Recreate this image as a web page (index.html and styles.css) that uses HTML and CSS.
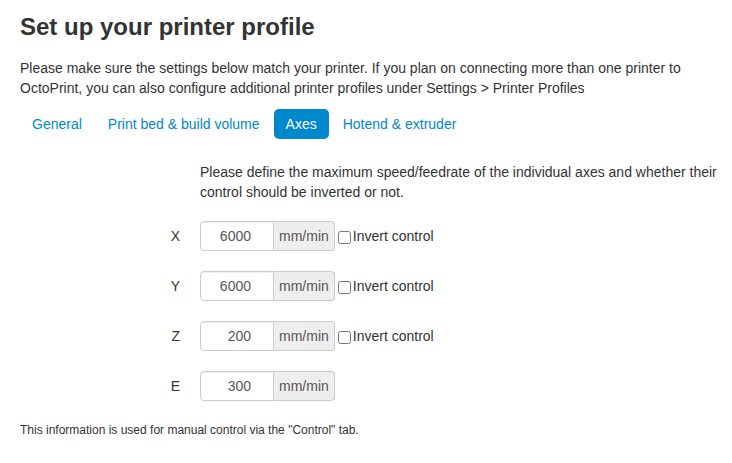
FILE: index.html
```html
<!DOCTYPE html>
<html>
<head>
<meta charset="utf-8">
<link rel="stylesheet" href="styles.css">
</head>
<body>
<div class="page">
  <h3 class="title">Set up your printer profile</h3>
  <p class="lead">Please make sure the settings below match your printer. If you plan on connecting more than one printer to OctoPrint, you can also configure additional printer profiles under Settings &gt; Printer Profiles</p>
  <ul class="pills">
    <li><a href="#">General</a></li>
    <li><a href="#">Print bed &amp; build volume</a></li>
    <li class="active"><a href="#">Axes</a></li>
    <li><a href="#">Hotend &amp; extruder</a></li>
  </ul>
  <form class="form">
    <p class="intro">Please define the maximum speed/feedrate of the individual axes and whether their control should be inverted or not.</p>
    <div class="group">
      <label class="axis">X</label>
      <div class="controls">
        <div class="append"><input class="num" type="text" value="6000"><span class="addon">mm/min</span></div>
        <label class="check"><input type="checkbox">Invert control</label>
      </div>
    </div>
    <div class="group">
      <label class="axis">Y</label>
      <div class="controls">
        <div class="append"><input class="num" type="text" value="6000"><span class="addon">mm/min</span></div>
        <label class="check"><input type="checkbox">Invert control</label>
      </div>
    </div>
    <div class="group">
      <label class="axis">Z</label>
      <div class="controls">
        <div class="append"><input class="num" type="text" value="200"><span class="addon">mm/min</span></div>
        <label class="check"><input type="checkbox">Invert control</label>
      </div>
    </div>
    <div class="group">
      <label class="axis">E</label>
      <div class="controls">
        <div class="append"><input class="num" type="text" value="300"><span class="addon">mm/min</span></div>
      </div>
    </div>
  </form>
  <p class="note">This information is used for manual control via the "Control" tab.</p>
</div>
</body>
</html>
```
FILE: styles.css
```css
html, body {
  margin: 0;
  padding: 0;
  background: #fff;
}
body {
  font-family: "Liberation Sans", Arial, sans-serif;
  font-size: 14px;
  line-height: 20px;
  color: #333;
}
.page {
  padding: 0 12px 0 20px;
}
.title {
  margin: 0;
  padding-top: 7px;
  font-size: 24px;
  line-height: 40px;
  font-weight: bold;
  color: #333;
}
.lead {
  margin: 11px 0 9px;
}
.pills {
  list-style: none;
  margin: 0 0 21px;
  padding: 0;
  display: flex;
}
.pills li {
  margin: 2px 2px 2px 0;
}
.pills a {
  display: block;
  padding: 8px 12px;
  line-height: 14px;
  color: #0088cc;
  text-decoration: none;
  border-radius: 5px;
}
.pills .active a {
  background: #0088cc;
  color: #fff;
}
.form {
  margin: 0;
}
.intro {
  margin: 0 0 19px 180px;
}
.group {
  display: flex;
  align-items: center;
  margin-bottom: 20px;
}
.axis {
  width: 160px;
  text-align: right;
  padding-right: 20px;
  color: #333;
}
.controls {
  display: flex;
  align-items: center;
}
.append {
  display: flex;
}
.num {
  box-sizing: border-box;
  width: 74px;
  height: 30px;
  margin: 0;
  padding: 4px 22px 4px 6px;
  border: 1px solid #ccc;
  border-radius: 4px 0 0 4px;
  font-family: "Liberation Sans", Arial, sans-serif;
  font-size: 14px;
  line-height: 20px;
  color: #555;
  text-align: right;
  box-shadow: inset 0 1px 1px rgba(0,0,0,0.075);
}
.addon {
  box-sizing: border-box;
  height: 30px;
  padding: 4px 5px;
  border: 1px solid #ccc;
  border-left: 0;
  border-radius: 0 4px 4px 0;
  background: #eee;
  color: #555;
  line-height: 20px;
}
.check {
  display: flex;
  align-items: center;
  color: #333;
}
.check input {
  width: 13px;
  height: 13px;
  margin: 2px 2px 0 3px;
}
.note {
  margin: 4px 0 0;
  font-size: 12px;
  line-height: 18px;
}
```
